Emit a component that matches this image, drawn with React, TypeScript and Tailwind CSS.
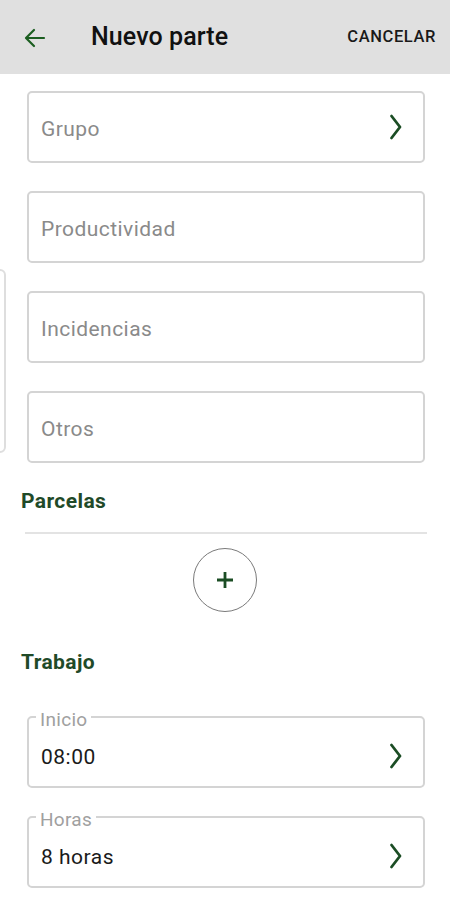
import React from "react";

const Chevron = () => (
  <svg width="14" height="26" viewBox="0 0 14 26" fill="none">
    <polyline points="2.5,2 11,13 2.5,24" stroke="#1b4d24" strokeWidth="2.8" strokeLinecap="round" strokeLinejoin="round" />
  </svg>
);

const Field = ({ placeholder, chevron }: { placeholder: string; chevron?: boolean }) => (
  <div className="h-[72px] border-2 border-[#d4d4d4] rounded-[5px] flex items-center pl-[12px] pr-[20px]">
    <span className="flex-1 text-[21px] tracking-[0.45px] text-[#8a8a8a] pt-[6px]">{placeholder}</span>
    {chevron && <Chevron />}
  </div>
);

const LabeledField = ({ label, value }: { label: string; value: string }) => (
  <div className="relative h-[72px] border-2 border-[#d4d4d4] rounded-[5px] flex items-center pl-[12px] pr-[20px] pt-[8px]">
    <span className="absolute -top-[7px] left-[7px] bg-white px-[4px] text-[19px] leading-[18px] tracking-[0.3px] text-[#a0a0a0]">{label}</span>
    <span className="flex-1 text-[21px] tracking-[0.5px] text-[#1a1a1a] pt-[3px]">{value}</span>
    <Chevron />
  </div>
);

export default function App() {
  return (
    <div className="relative w-[450px] h-[900px] bg-white overflow-hidden" style={{ fontFamily: "Roboto, 'Noto Sans', sans-serif" }}>
      <div className="h-[74px] bg-[#e0e0e0] flex items-center">
        <div className="w-[91px] flex items-center pl-[24px] pt-[1px]">
          <svg width="22" height="20" viewBox="0 0 22 20" fill="none">
            <path d="M20 10H3M10 2L2 10L10 18" stroke="#1b5e20" strokeWidth="2.2" strokeLinecap="round" strokeLinejoin="round" />
          </svg>
        </div>
        <span className="flex-1 text-[25px] font-medium text-[#111] tracking-[0.1px]">Nuevo parte</span>
        <span className="pr-[14px] text-[16.5px] font-medium text-[#1a1a1a] tracking-[0.6px]">CANCELAR</span>
      </div>

      <div className="absolute left-[-20px] top-[269px] w-[26px] h-[184px] border-2 border-[#dedede] rounded-[6px]" />

      <div className="ml-[27px] mr-[25px] mt-[17px] flex flex-col gap-[28px]">
        <Field placeholder="Grupo" chevron />
        <Field placeholder="Productividad" />
        <Field placeholder="Incidencias" />
        <Field placeholder="Otros" />
      </div>

      <div className="ml-[21px] mt-[26px] text-[21px] leading-[24px] font-bold text-[#1f4a28] tracking-[0.4px]">Parcelas</div>
      <div className="ml-[25px] mr-[23px] mt-[19px] h-[2px] bg-[#e3e3e3]" />
      <div className="flex justify-center mt-[14px]">
        <div className="w-[64px] h-[64px] rounded-full border border-[#7a7a7a] flex items-center justify-center">
          <svg width="18" height="18" viewBox="0 0 18 18">
            <path d="M9 1V17M1 9H17" stroke="#1b4d24" strokeWidth="2.8" />
          </svg>
        </div>
      </div>
      <div className="ml-[21px] mt-[38px] text-[21px] leading-[24px] font-bold text-[#1f4a28] tracking-[0.4px]">Trabajo</div>

      <div className="ml-[27px] mr-[25px] mt-[42px] flex flex-col gap-[28px]">
        <LabeledField label="Inicio" value="08:00" />
        <LabeledField label="Horas" value="8 horas" />
      </div>
    </div>
  );
}
